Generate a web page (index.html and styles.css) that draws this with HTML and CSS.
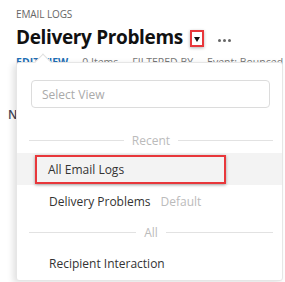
FILE: index.html
```html
<!DOCTYPE html>
<html>
<head>
<meta charset="utf-8">
<link rel="stylesheet" href="styles.css">
</head>
<body>
<div class="page">
  <div class="eyebrow">EMAIL LOGS</div>
  <div class="title-row">
    <h1 class="title">Delivery Problems</h1>
    <span class="caret-box"><span class="caret"></span></span>
    <span class="more"><i></i><i></i><i></i></span>
  </div>
  <div class="toolbar">
    <span class="link">EDIT VIEW</span>
    <span class="meta">0 Items</span>
    <span class="meta">FILTERED BY</span>
    <span class="meta">Event: Bounced</span>
  </div>
  <div class="content">N</div>

  <div class="popup">
    <div class="notch"></div>
    <div class="search"><span class="placeholder">Select View</span></div>
    <div class="divider"><span>Recent</span></div>
    <div class="item hover"><span class="hl">All Email Logs</span></div>
    <div class="item">Delivery Problems <span class="tag">Default</span></div>
    <div class="divider all"><span>All</span></div>
    <div class="item">Recipient Interaction</div>
  </div>
</div>
</body>
</html>
```

FILE: styles.css
```css
* { box-sizing: border-box; }
html, body { margin: 0; padding: 0; background: #fff; }
body { font-family: "Open Sans", "Liberation Sans", sans-serif; color: #222; }
.page { position: relative; width: 285px; height: 282px; overflow: hidden; padding-left: 16px; }
.eyebrow { padding-top: 8px; font-size: 10px; line-height: 12px; color: #666; letter-spacing: -0.1px; }
.title-row { display: flex; align-items: center; height: 28px; margin-top: 3px; }
.title { margin: 0; font-size: 19px; font-weight: 700; line-height: 28px; color: #111; letter-spacing: -0.35px; }
.caret-box { margin-left: 7px; width: 14px; height: 17px; border: 2px solid #e8373b; display: flex; align-items: center; justify-content: center; box-shadow: 0 1px 3px rgba(0,0,0,0.3); margin-top: 3px; }
.caret { width: 0; height: 0; border-left: 3.5px solid transparent; border-right: 3.5px solid transparent; border-top: 5px solid #111; margin-top: 2px; }
.more { margin-left: 14px; display: flex; gap: 2px; margin-top: 7px; }
.more i { display: block; width: 3px; height: 3px; border-radius: 50%; background: #666; }
.toolbar { display: flex; gap: 14px; font-size: 10.5px; margin-top: 4px; line-height: 14px; color: #777; white-space: nowrap; }
.toolbar .link { color: #1f6fb5; font-weight: 700; }
.content { margin-top: 37px; margin-left: -8px; font-size: 12px; color: #445; font-weight: 600; }
.popup { position: absolute; left: 16px; top: 62px; width: 267px; height: 219px; background: #fff; border: 1px solid #e6e6e6; border-radius: 3px; box-shadow: -3px 2px 6px rgba(0,0,0,0.12); padding: 17px 9px 0 12px; }
.notch { position: absolute; left: 20px; top: -7px; width: 12px; height: 12px; background: #fff; border-left: 1px solid #e0e0e0; border-top: 1px solid #e0e0e0; transform: rotate(45deg); }
.search { margin: 0 3px 0 2px; height: 28px; border: 1px solid #dcdcdc; border-radius: 4px; padding-left: 10px; display: flex; align-items: center; }
.placeholder { font-size: 12px; color: #aaa; }
.divider { display: flex; align-items: center; gap: 8px; margin-top: 25px; height: 14px; font-size: 12px; color: #bbb; }
.divider::before, .divider::after { content: ""; flex: 1; height: 1px; background: #e2e2e2; }
.divider.all { margin-top: 8px; margin-bottom: 8px; }
.item { height: 32px; display: flex; align-items: center; padding-left: 20px; font-size: 12px; color: #333; }
.item .tag { color: #bbb; margin-left: 10px; }
.item.hover { margin: 6px -9px 0 -12px; padding-left: 20px; background: #f3f3f3; }
.hl { display: flex; align-items: center; height: 29px; width: 191px; padding-left: 11px; border: 2px solid #e8373b; box-shadow: 0 1px 3px rgba(0,0,0,0.35); margin-left: -2px; }
```
